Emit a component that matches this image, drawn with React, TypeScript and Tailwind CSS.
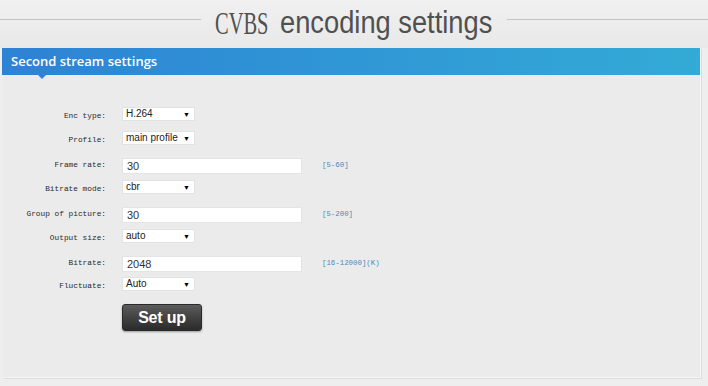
import React from "react";

const labelCls =
  "w-[104px] shrink-0 text-right text-[7.8px] leading-none text-[#2a2a2a] whitespace-pre";
const monoFont = { fontFamily: '"Liberation Mono", "DejaVu Sans Mono", monospace' };

function Select({ value }: { value: string }) {
  return (
    <div className="ml-[16px] w-[73px] h-[14px] bg-white border border-[#e2e2e2] flex items-center justify-between pl-[3px] pr-[4px] text-[10px] text-[#222] leading-none whitespace-nowrap">
      <span>{value}</span>
      <span className="text-[7px] text-black">▼</span>
    </div>
  );
}

function TextInput({ value }: { value: string }) {
  return (
    <div className="ml-[16px] w-[180px] h-[16px] bg-white border border-[#e4e4e4] flex items-center pl-[4px] text-[11px] text-[#333] leading-none">
      {value}
    </div>
  );
}

function SelectRow({ label, value, mt }: { label: string; value: string; mt: string }) {
  return (
    <div className={`flex items-center ${mt}`}>
      <div className={`${labelCls} translate-y-[3px]`} style={monoFont}>
        {label}
      </div>
      <Select value={value} />
    </div>
  );
}

function InputRow({ label, value, hint, mt }: { label: string; value: string; hint: string; mt: string }) {
  return (
    <div className={`flex items-center ${mt}`}>
      <div className={labelCls} style={monoFont}>
        {label}
      </div>
      <TextInput value={value} />
      <div className="ml-[20px] text-[7.4px] leading-none text-[#4d88bd]" style={monoFont}>
        {hint}
      </div>
    </div>
  );
}

export default function App() {
  return (
    <div
      className="w-[708px] h-[386px] bg-[#eeeeee] overflow-hidden"
      style={{ fontFamily: '"Liberation Sans", Arial, sans-serif' }}
    >
      <div className="h-[48px] flex items-center bg-gradient-to-b from-[#f0f0f0] to-[#e9e9e9]">
        <div className="flex-1 h-px bg-[#c4c4c4] -translate-y-[5px]" />
        <div className="mx-[14px] flex items-center text-[#505050] h-[48px]">
          <div className="relative w-[55px] h-[32px]">
            <span
              className="absolute left-0 top-0 inline-block text-[31px] leading-none whitespace-nowrap"
              style={{ fontFamily: '"Liberation Serif", serif', transform: "scaleX(0.66)", transformOrigin: "left" }}
            >
              CVBS
            </span>
          </div>
          <div className="relative ml-[10px] w-[213px] h-[32px]">
            <span
              className="absolute left-0 top-[-1px] inline-block text-[31px] leading-none whitespace-nowrap"
              style={{ transform: "scaleX(0.88)", transformOrigin: "left" }}
            >
              encoding settings
            </span>
          </div>
        </div>
        <div className="flex-1 h-px bg-[#c4c4c4] -translate-y-[5px]" />
      </div>

      <div className="ml-[2px] w-[699px] h-[330px] bg-[#ebebeb] border-r border-b border-[#f6f6f6] shadow-[1px_1px_0_#dcdcdc]">
        <div className="relative h-[27px] bg-gradient-to-r from-[#2e82d4] to-[#33abd6] flex items-center pl-[9px]">
          <span
            className="text-white text-[13px] font-semibold"
            style={{ fontFamily: '"Open Sans", "Noto Sans", sans-serif' }}
          >
            Second stream settings
          </span>
          <div className="absolute left-[36px] top-[27px] w-0 h-0 border-l-[4px] border-r-[4px] border-t-[4px] border-l-transparent border-r-transparent border-t-[#2f85d4]" />
        </div>

        <div className="flex flex-col">
          <SelectRow label="Enc type:" value="H.264" mt="mt-[32px]" />
          <SelectRow label="Profile:" value="main profile" mt="mt-[10px]" />
          <InputRow label="Frame rate:" value="30" hint="[5-60]" mt="mt-[13px]" />
          <SelectRow label="Bitrate mode:" value="cbr" mt="mt-[6px]" />
          <InputRow label="Group of picture:" value="30" hint="[5-200]" mt="mt-[13px]" />
          <SelectRow label="Output size:" value="auto" mt="mt-[6px]" />
          <InputRow label="Bitrate:" value="2048" hint="[16-12000](K)" mt="mt-[13px]" />
          <SelectRow label="Fluctuate:" value="Auto" mt="mt-[5px]" />
          <div className="mt-[13px] ml-[120px]">
            <div className="w-[80px] h-[27px] rounded-[3px] border border-[#2a2a2a] bg-gradient-to-b from-[#5c5c5c] to-[#2b2b2b] shadow-[0_1px_2px_rgba(0,0,0,0.35)] flex items-center justify-center text-white font-bold text-[16px] tracking-[-0.2px] leading-none">
              Set up
            </div>
          </div>
        </div>
      </div>
    </div>
  );
}
